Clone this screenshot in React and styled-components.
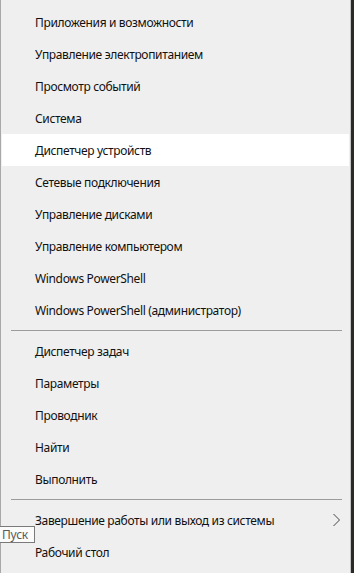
import React from "react";
import styled, { createGlobalStyle } from "styled-components";

const Global = createGlobalStyle`
  html, body { margin: 0; padding: 0; }
  body { background: #2c2a27; }
  #root { width: 354px; height: 573px; }
`;

const Page = styled.div`
  position: relative;
  display: flex;
  width: 354px;
  height: 573px;
  overflow: hidden;
  background: #2c2a27;
`;

const Menu = styled.nav`
  box-sizing: border-box;
  width: 351px;
  height: 573px;
  background: #efefef;
  border-left: 1px solid #a8a8a8;
  border-right: 1px solid #c4c4c4;
  padding-top: 6px;
  display: flex;
  flex-direction: column;
  font-family: "Noto Sans", "Open Sans", sans-serif;
`;

const Item = styled.div`
  display: flex;
  align-items: center;
  height: 32px;
  margin: 0 1px;
  padding: 0 8px 0 33px;
  font-size: 12px;
  letter-spacing: -0.35px;
  color: #111;
  background: ${(p) => (p.$active ? "#ffffff" : "transparent")};
  white-space: nowrap;
`;

const Label = styled.span`
  flex: 1;
`;

const Separator = styled.div`
  height: 9px;
  display: flex;
  align-items: center;
  padding: 0 8px 0 10px;
  &::after {
    content: "";
    flex: 1;
    height: 1px;
    background: #9c9c9c;
  }
`;

const Tooltip = styled.div`
  position: absolute;
  left: -1px;
  top: 526px;
  box-sizing: border-box;
  width: 36px;
  height: 17px;
  padding: 0 0 0 2px;
  display: flex;
  align-items: center;
  background: #fbfbfb;
  border: 1px solid #7a7a7a;
  font-family: "Noto Sans", "Open Sans", sans-serif;
  font-size: 12px;
  letter-spacing: -0.2px;
  color: #5a5a5a;
`;

const Chevron = () => (
  <svg width="9" height="14" viewBox="0 0 9 14">
    <path d="M1.5 1 L7.5 7 L1.5 13" fill="none" stroke="#444" strokeWidth="1" />
  </svg>
);

const groups = [
  [
    "Приложения и возможности",
    "Управление электропитанием",
    "Просмотр событий",
    "Система",
    "Диспетчер устройств",
    "Сетевые подключения",
    "Управление дисками",
    "Управление компьютером",
    "Windows PowerShell",
    "Windows PowerShell (администратор)",
  ],
  ["Диспетчер задач", "Параметры", "Проводник", "Найти", "Выполнить"],
  ["Завершение работы или выход из системы", "Рабочий стол"],
];

export default function App() {
  return (
    <Page>
      <Global />
      <Menu>
        {groups.map((g, gi) => (
          <React.Fragment key={gi}>
            {gi > 0 && <Separator />}
            {g.map((t) => (
              <Item key={t} $active={t === "Диспетчер устройств"}>
                <Label>{t}</Label>
                {t.startsWith("Завершение") && <Chevron />}
              </Item>
            ))}
          </React.Fragment>
        ))}
      </Menu>
      <Tooltip>Пуск</Tooltip>
    </Page>
  );
}
